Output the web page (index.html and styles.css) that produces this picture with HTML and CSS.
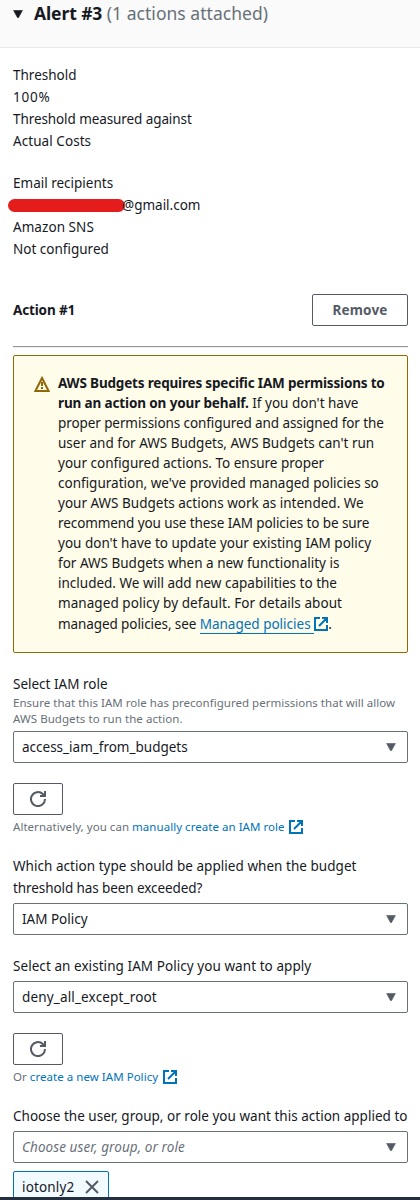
FILE: index.html
```html
<!DOCTYPE html>
<html lang="en">
<head>
<meta charset="utf-8">
<title>Budget alert</title>
<link rel="stylesheet" href="styles.css">
</head>
<body>
<svg class="defs" width="0" height="0">
  <symbol id="caret" viewBox="0 0 10 8"><path d="M0.6 0.5h8.8L5.6 7.4Q5 8.2 4.4 7.4z" fill="currentColor" stroke="currentColor" stroke-width=".6"/></symbol>
  <symbol id="external" viewBox="0 0 14 14"><path d="M6 1H1v12h12V8M8 1h5v5M13 1L5 9" fill="none" stroke="currentColor" stroke-width="2"/></symbol>
  <symbol id="refresh" viewBox="0 0 16 16"><path d="M15 8A7 7 0 1 1 12.8 3L15 5M15 0V5H10" fill="none" stroke="currentColor" stroke-width="2"/></symbol>
  <symbol id="warning" viewBox="0 0 16 16"><path d="M8 2L14.6 15H1.4z" fill="none" stroke="currentColor" stroke-width="2"/><path d="M8 6v4M8 11v2" stroke="currentColor" stroke-width="2"/></symbol>
  <symbol id="close" viewBox="0 0 14 14"><path d="M1 1L13 13M13 1L1 13" fill="none" stroke="currentColor" stroke-width="2"/></symbol>
</svg>
<div class="page">
  <header class="header">
    <svg class="caret"><use href="#caret"/></svg>
    <h2 class="title"><span class="name">Alert #3</span> <span class="count">(1 actions attached)</span></h2>
  </header>
  <main class="content">
    <div class="group">
      <div>Threshold</div><div class="percent">100%</div><div class="tight">Threshold measured against</div><div class="loose">Actual Costs</div>
    </div>
    <div class="group">
      <div>Email recipients</div>
      <div class="email"><span class="redacted"></span>@gmail.com</div>
      <div class="loose">Amazon SNS</div><div>Not configured</div>
    </div>
    <div class="action"><h3 class="action-title">Action #1</h3><button class="button remove">Remove</button></div>
    <hr class="rule">
    <section class="alert">
      <svg class="warning"><use href="#warning"/></svg>
      <p class="alert-text"><b class="lead">AWS Budgets requires specific IAM permissions to</b><br><b class="lead-end">run an action on your behalf.</b> If you don't have<br><span class="tight">proper permissions configured and assigned for the</span><br>user and for AWS Budgets, AWS Budgets can't run<br>your configured actions. To ensure proper<br>configuration, we've provided managed policies so<br>your AWS Budgets actions work as intended. We<br><span class="tight">recommend you use these IAM policies to be sure</span><br>you don't have to update your existing IAM policy<br>for AWS Budgets when a new functionality is<br>included. We will add new capabilities to the<br><span class="loose">managed policy by default. For details about</span><br><span class="last-line"><span class="tight">managed policies, see </span><a class="link underlined">Managed policies </a><svg class="external"><use href="#external"/></svg>.</span></p>
    </section>
    <label class="label">Select IAM role</label>
    <p class="hint">Ensure that this IAM role has preconfigured permissions that will allow<br><span class="loose">AWS Budgets to run the action.</span></p>
    <div class="select"><span>access_iam_from_budgets</span><svg class="caret"><use href="#caret"/></svg></div>
    <button class="button refresh"><svg class="icon"><use href="#refresh"/></svg></button>
    <p class="hint after">Alternatively, you can <a class="link">manually create an IAM role</a> <svg class="external"><use href="#external"/></svg></p>
    <label class="label question">Which action type should be applied when the budget<br><span class="tight">threshold has been exceeded?</span></label>
    <div class="select"><span>IAM Policy</span><svg class="caret"><use href="#caret"/></svg></div>
    <label class="label loose">Select an existing IAM Policy you want to apply</label>
    <div class="select"><span class="wide">deny_all_except_root</span><svg class="caret"><use href="#caret"/></svg></div>
    <button class="button refresh"><svg class="icon"><use href="#refresh"/></svg></button>
    <p class="hint after policy">Or <a class="link">create a new IAM Policy</a> <svg class="external"><use href="#external"/></svg></p>
    <label class="label target">Choose the user, group, or role you want this action applied to</label>
    <div class="select"><span class="placeholder">Choose user, group, or role</span><svg class="caret"><use href="#caret"/></svg></div>
    <div class="token"><span class="wide">iotonly2</span><svg class="close"><use href="#close"/></svg></div>
  </main>
  <footer class="footer"></footer>
</div>
</body>
</html>
```
FILE: styles.css
```css
* { box-sizing: border-box; }
body { margin: 0; background: #fff; color: #16191f; font: 13.5px/22px "Noto Sans", sans-serif; white-space: nowrap; }
h2, h3, p { margin: 0; }
svg { flex: none; }
.defs { position: absolute; }
.tight { letter-spacing: -0.09px; }
.loose { letter-spacing: 0.06px; }
.wide { letter-spacing: 0.16px; }
.percent { letter-spacing: 0.8px; }
.page { width: 420px; height: 1200px; display: flex; flex-direction: column; overflow: hidden; }
.header { flex: none; height: 48px; padding: 2px 13px; display: flex; gap: 11px; background: #fafafa; border-bottom: 1px solid #e6e8e8; }
.header .caret { margin-top: 8px; }
.title { font-size: 17.5px; line-height: 22px; font-weight: 700; }
.name { letter-spacing: -0.1px; }
.count { font-weight: 400; color: #687078; letter-spacing: 0.03px; }
.caret { width: 10px; height: 8px; }
.content { height: 1149px; overflow: hidden; padding: 16px 12px 0 13px; display: flex; flex-direction: column; }
.content > * { flex: none; }
.group { margin-bottom: 20px; }
.email { display: flex; }
.redacted { width: 117px; height: 13px; margin: 5px -3px 0 -5px; border-radius: 7px; background: #e51c1c; }
.action { display: flex; justify-content: space-between; align-items: center; margin-top: 14px; }
.action-title { font-size: 13.5px; letter-spacing: -0.15px; }
.button { border: 1px solid #545b64; border-radius: 2px; background: #fff; color: #545b64; height: 32px; font: 700 13.5px/20px "Noto Sans", sans-serif; padding: 0; display: flex; align-items: center; justify-content: center; }
.remove { width: 96px; letter-spacing: 0.2px; }
.rule { margin: 20px 0 7px; height: 2px; width: 100%; border: 0; border-bottom: 1px solid #eee; background: #979797; }
.alert { display: flex; gap: 8px; height: 298px; padding: 17px 20px; background: #fffce9; border: 1px solid #906806; border-radius: 2px; }
.warning { width: 16px; height: 16px; margin-top: 3px; color: #906806; }
.alert-text { line-height: 20px; }
.lead { letter-spacing: -0.18px; }
.lead-end { letter-spacing: -0.13px; }
.last-line { position: relative; top: 1px; }
.link { color: #0073bb; }
.underlined { border-bottom: 1px solid #0073bb; white-space: pre; }
.external { width: 14px; height: 14px; color: #0073bb; vertical-align: -2px; }
.label { margin-top: 20px; }
.question { letter-spacing: 0.04px; }
.target { letter-spacing: 0.015px; }
.hint { font-size: 11.5px; line-height: 16px; color: #687078; letter-spacing: 0.02px; }
.hint + .select { margin-top: 4px; }
.select { height: 32px; margin-top: 4px; border: 1px solid #687078; border-radius: 2px; padding: 0 11px 0 8px; display: flex; align-items: center; justify-content: space-between; }
.select .caret { color: #545b64; }
.placeholder { color: #687078; font-style: italic; letter-spacing: 0.08px; }
.refresh { width: 50px; margin-top: 20px; }
.icon { width: 16px; height: 16px; }
.after { margin-top: 4px; letter-spacing: 0.04px; }
.after .external { margin-left: 1px; vertical-align: -3px; }
.policy .external { margin-left: 2px; }
.token { width: 96px; height: 32px; margin-top: 8px; padding: 0 9px 0 8px; display: flex; align-items: center; justify-content: space-between; background: #f1faff; border: 1px solid #0073bb; border-radius: 2px; }
.close { width: 14px; height: 14px; color: #545b64; }
.footer { flex: none; height: 3px; background: #232f3e; }
```
